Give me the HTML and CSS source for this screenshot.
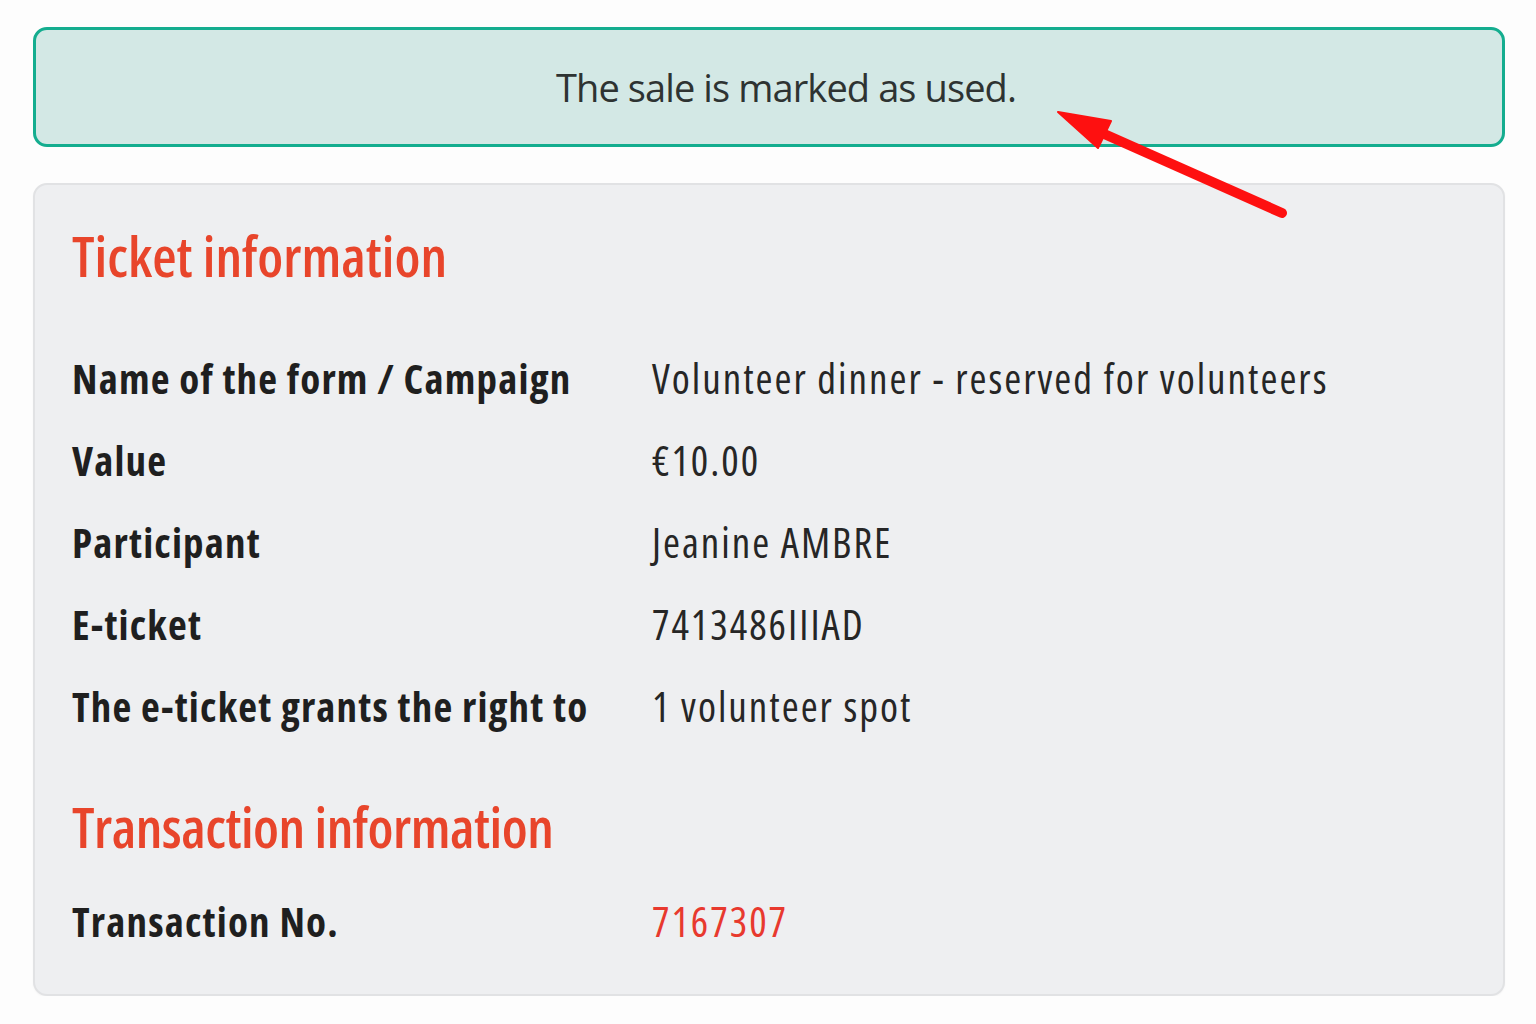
FILE: index.html
```html
<!DOCTYPE html>
<html lang="en">
<head>
<meta charset="utf-8">
<title>Ticket</title>
<link rel="stylesheet" href="styles.css">
</head>
<body>
<div class="page">
  <div class="alert">The sale is marked as used.</div>
  <div class="card">
    <h2 class="section-title">Ticket information</h2>
    <div class="info-grid">
      <div class="label">Name of the form / Campaign</div>
      <div class="value">Volunteer dinner - reserved for volunteers</div>
      <div class="label">Value</div>
      <div class="value">€10.00</div>
      <div class="label">Participant</div>
      <div class="value">Jeanine AMBRE</div>
      <div class="label">E-ticket</div>
      <div class="value">7413486IIIAD</div>
      <div class="label">The e-ticket grants the right to</div>
      <div class="value">1 volunteer spot</div>
    </div>
    <h2 class="section-title section-title--second">Transaction information</h2>
    <div class="info-grid info-grid--last">
      <div class="label">Transaction No.</div>
      <div class="value value--link">7167307</div>
    </div>
  </div>
  <svg class="arrow" width="260" height="125" viewBox="0 0 260 125">
    <line x1="62" y1="33" x2="242" y2="113" stroke="#fe1010" stroke-width="10" stroke-linecap="round"/>
    <polygon points="18,12 71,21 58,48" fill="#fe1010" stroke="#fe1010" stroke-width="2" stroke-linejoin="round"/>
  </svg>
</div>
</body>
</html>
```
FILE: styles.css
```css
html, body {
  margin: 0;
  padding: 0;
  background: #fdfdfd;
}
body {
  font-family: "Open Sans", "Liberation Sans", sans-serif;
}
.page {
  position: relative;
  padding: 27px 31px 0 33px;
}
.alert {
  box-sizing: border-box;
  height: 120px;
  border: 3px solid #14ad8f;
  border-radius: 14px;
  background: #d3e8e5;
  color: #2e3332;
  font-size: 38px;
  letter-spacing: -0.9px;
  font-stretch: 100%;
  display: flex;
  align-items: center;
  justify-content: center;
  padding-left: 34px;
}
.card {
  box-sizing: border-box;
  margin-top: 36px;
  height: 813px;
  border: 2px solid #e1e2e4;
  border-radius: 14px;
  background: #eeeff1;
  padding: 37px 37px 0 37px;
  box-shadow: 0 1px 2px rgba(0,0,0,0.04);
}
.section-title {
  margin: 0;
  font-size: 56px;
  line-height: 67px;
  font-weight: 600;
  font-stretch: 75%;
  letter-spacing: 0;
  color: #e8452b;
}
.section-title--second {
  margin-top: 46px;
  letter-spacing: -0.5px;
}
.info-grid {
  display: grid;
  grid-template-columns: 580px 1fr;
  grid-auto-rows: 82px;
  margin-top: 48px;
  align-items: center;
  font-size: 41px;
}
.info-grid--last {
  margin-top: 20px;
}
.label {
  font-weight: 700;
  font-stretch: 75%;
  letter-spacing: 1.2px;
  color: #1f1f1f;
}
.value {
  font-weight: 400;
  font-stretch: 75%;
  letter-spacing: 2px;
  color: #262626;
}
.value--link {
  color: #e8392e;
}
.arrow {
  position: absolute;
  left: 1040px;
  top: 100px;
}
```
